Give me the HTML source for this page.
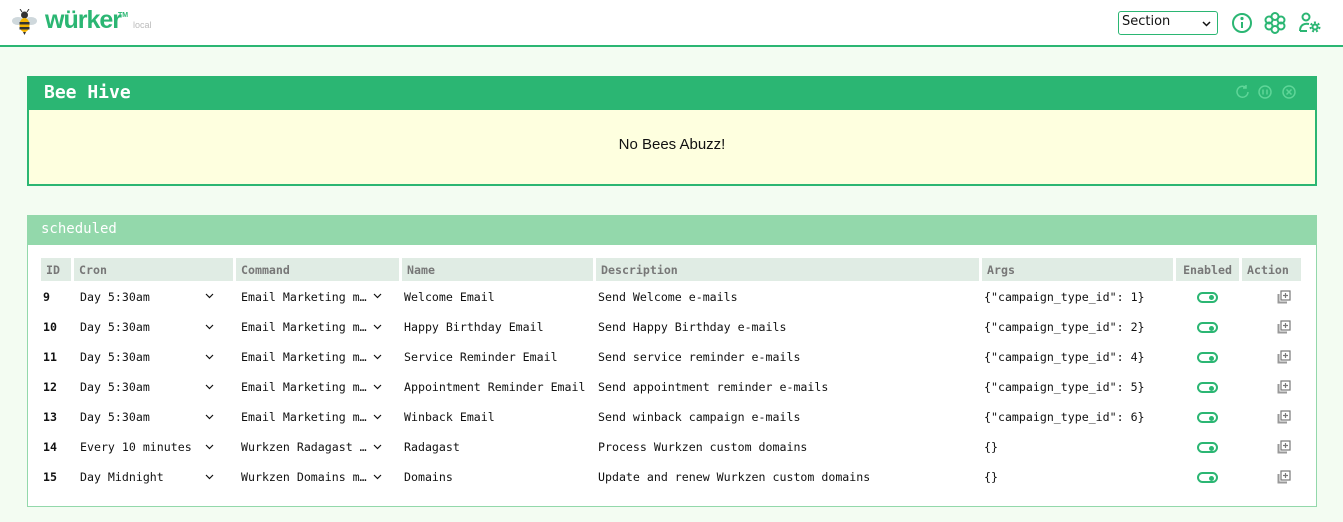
<!DOCTYPE html>
<html><head><meta charset="utf-8"><style>
*{box-sizing:border-box;margin:0;padding:0}
body{width:1343px;height:522px;background:#f3fcf2;font-family:"Liberation Sans",sans-serif;position:relative;overflow:hidden}
.top{position:absolute;left:0;top:0;width:1343px;height:47px;background:#fff;border-bottom:2px solid #2bb673}
.logo{position:absolute;left:45px;top:6px;font-size:25px;font-weight:bold;color:#2bb673;font-family:"Liberation Sans",sans-serif;letter-spacing:-1px}
.tm{position:absolute;left:118px;top:12px;font-size:7px;color:#2bb673;font-weight:bold}
.local{position:absolute;left:133px;top:20px;font-size:9px;color:#bbb}
.sel{position:absolute;left:1118px;top:11px;width:100px;height:24px;border:1px solid #2bb673;border-radius:3px;font-family:"DejaVu Sans",sans-serif;font-size:13px;padding:2px 3px;color:#111}
.p1{position:absolute;left:27px;top:76px;width:1290px;height:110px;border:2px solid #2bb673;background:#feffdf}
.p1 .h{height:32px;background:#2bb673;color:#fff;font-family:"DejaVu Sans Mono",monospace;font-weight:bold;font-size:18px;padding:4px 15px}
.p1 .b{text-align:center;font-size:15px;padding-top:26px;color:#111}
.p2{position:absolute;left:27px;top:215px;width:1290px;height:292px;border:1px solid #93d8ab;background:#fff}
.p2 .h{height:29px;background:#93d8ab;color:#fff;font-family:"DejaVu Sans Mono",monospace;font-size:14px;padding:5px 13px}
table{position:absolute;left:10px;top:42px;border-collapse:separate;border-spacing:3px 0;font-family:"DejaVu Sans Mono",monospace;font-size:11.6px;color:#111;table-layout:fixed;width:1266px}
th{background:#e0ece4;color:#777;text-align:left;height:23px;padding:0 5px;font-size:11.6px}
td{height:30px;padding:0 2px;white-space:nowrap;overflow:hidden}
td.dd{position:relative;padding-left:6px}
td.cm{padding-left:5px}
td.dd svg{position:absolute;right:19px;top:12px}
td.cm svg{right:17px}
.tg{display:inline-block;width:21px;height:11px;border:2px solid #2bb673;border-radius:6px;position:relative;vertical-align:middle}
.tg:after{content:"";position:absolute;right:2px;top:1.5px;width:5px;height:5px;border-radius:50%;background:#2bb673}
.ac{text-align:right;padding-right:10px}
.ac svg{vertical-align:middle}
</style></head><body>
<div class="top">
<svg style="position:absolute;left:11px;top:9px" width="27" height="27" viewBox="0 0 27 27"><ellipse cx="7" cy="12" rx="6" ry="4" fill="#cfd8dc"/><ellipse cx="20" cy="12" rx="6" ry="4" fill="#cfd8dc"/><circle cx="13.5" cy="6" r="3.5" fill="#333"/><line x1="11" y1="3" x2="9" y2="0" stroke="#333"/><line x1="16" y1="3" x2="18" y2="0" stroke="#333"/><ellipse cx="13.5" cy="16" rx="5" ry="7" fill="#f4b400"/><rect x="8.5" y="13" width="10" height="2.5" fill="#333"/><rect x="8.5" y="18" width="10" height="2.5" fill="#333"/><path d="M12 23 L13.5 26 L15 23Z" fill="#333"/></svg>
<div class="logo">würker</div><div class="tm">TM</div><div class="local">local</div>
<div class="sel">Section<svg style="position:absolute;right:6px;top:9px" width="9" height="6" viewBox="0 0 9 6"><path d="M1 1 L4.5 4.5 L8 1" fill="none" stroke="#111" stroke-width="1.5"/></svg></div>
<svg style="position:absolute;left:1231px;top:12px" width="22" height="22" viewBox="0 0 22 22" fill="none" stroke="#2bb673" stroke-width="2"><circle cx="11" cy="11" r="9"/><line x1="11" y1="10" x2="11" y2="16"/><circle cx="11" cy="6.5" r="0.6" fill="#2bb673"/></svg>
<svg style="position:absolute;left:1264px;top:12px" width="22" height="22" viewBox="0 0 22 22" fill="none" stroke="#2bb673" stroke-width="2"><circle cx="11" cy="4.5" r="3.5"/><circle cx="11" cy="17.5" r="3.5"/><circle cx="5" cy="8" r="3.5"/><circle cx="17" cy="8" r="3.5"/><circle cx="5" cy="14" r="3.5"/><circle cx="17" cy="14" r="3.5"/></svg>
<svg style="position:absolute;left:1298px;top:12px" width="24" height="22" viewBox="0 0 24 22" fill="none" stroke="#2bb673" stroke-width="2"><circle cx="8" cy="5" r="3.5"/><path d="M2 19 C2 13 6 11 11 12 M2 19 H9"/><circle cx="17" cy="15" r="2.5"/><circle cx="17" cy="15" r="4.5" stroke-dasharray="2 2"/></svg>
</div>
<div class="p1"><div class="h">Bee Hive
<svg style="position:absolute;right:14px;top:6px" width="66" height="16" viewBox="0 0 66 16" fill="none" stroke="#5fd598" stroke-width="1.5"><path d="M13 8 A5.5 5.5 0 1 1 11 3.5 M11 1 V4 H8"/><circle cx="30" cy="8" r="6"/><line x1="28" y1="5.5" x2="28" y2="10.5"/><line x1="32" y1="5.5" x2="32" y2="10.5"/><circle cx="54" cy="8" r="6"/><path d="M51.5 5.5 L56.5 10.5 M56.5 5.5 L51.5 10.5"/></svg></div>
<div class="b">No Bees Abuzz!</div></div>
<div class="p2"><div class="h">scheduled</div>
<table>
<colgroup><col style="width:30px"><col style="width:159px"><col style="width:163px"><col style="width:191px"><col style="width:383px"><col style="width:191px"><col style="width:63px"><col style="width:59px"></colgroup>
<tr><th>ID</th><th>Cron</th><th>Command</th><th>Name</th><th>Description</th><th>Args</th><th style="text-align:center">Enabled</th><th>Action</th></tr>
<tr><td style="height:31px"><b>9</b></td><td class="dd">Day 5:30am<svg width="9" height="6"><path d="M1 1 L4.5 4.5 L8 1" fill="none" stroke="#111" stroke-width="1.2"/></svg></td><td class="dd cm">Email Marketing m…<svg width="9" height="6"><path d="M1 1 L4.5 4.5 L8 1" fill="none" stroke="#111" stroke-width="1.2"/></svg></td><td>Welcome Email</td><td>Send Welcome e-mails</td><td>{"campaign_type_id": 1}</td><td style="text-align:center"><i class="tg"></i></td><td class="ac"><svg width="14" height="14" viewBox="0 0 14 14" fill="none" stroke="#777" stroke-width="1.2"><rect x="4" y="1" width="9" height="9"/><path d="M8.5 3 V8 M6 5.5 H11"/><path d="M1.5 4 V12.5 H10" stroke="#999" stroke-width="2"/></svg></td></tr>
<tr><td><b>10</b></td><td class="dd">Day 5:30am<svg width="9" height="6"><path d="M1 1 L4.5 4.5 L8 1" fill="none" stroke="#111" stroke-width="1.2"/></svg></td><td class="dd cm">Email Marketing m…<svg width="9" height="6"><path d="M1 1 L4.5 4.5 L8 1" fill="none" stroke="#111" stroke-width="1.2"/></svg></td><td>Happy Birthday Email</td><td>Send Happy Birthday e-mails</td><td>{"campaign_type_id": 2}</td><td style="text-align:center"><i class="tg"></i></td><td class="ac"><svg width="14" height="14" viewBox="0 0 14 14" fill="none" stroke="#777" stroke-width="1.2"><rect x="4" y="1" width="9" height="9"/><path d="M8.5 3 V8 M6 5.5 H11"/><path d="M1.5 4 V12.5 H10" stroke="#999" stroke-width="2"/></svg></td></tr>
<tr><td><b>11</b></td><td class="dd">Day 5:30am<svg width="9" height="6"><path d="M1 1 L4.5 4.5 L8 1" fill="none" stroke="#111" stroke-width="1.2"/></svg></td><td class="dd cm">Email Marketing m…<svg width="9" height="6"><path d="M1 1 L4.5 4.5 L8 1" fill="none" stroke="#111" stroke-width="1.2"/></svg></td><td>Service Reminder Email</td><td>Send service reminder e-mails</td><td>{"campaign_type_id": 4}</td><td style="text-align:center"><i class="tg"></i></td><td class="ac"><svg width="14" height="14" viewBox="0 0 14 14" fill="none" stroke="#777" stroke-width="1.2"><rect x="4" y="1" width="9" height="9"/><path d="M8.5 3 V8 M6 5.5 H11"/><path d="M1.5 4 V12.5 H10" stroke="#999" stroke-width="2"/></svg></td></tr>
<tr><td><b>12</b></td><td class="dd">Day 5:30am<svg width="9" height="6"><path d="M1 1 L4.5 4.5 L8 1" fill="none" stroke="#111" stroke-width="1.2"/></svg></td><td class="dd cm">Email Marketing m…<svg width="9" height="6"><path d="M1 1 L4.5 4.5 L8 1" fill="none" stroke="#111" stroke-width="1.2"/></svg></td><td>Appointment Reminder Email</td><td>Send appointment reminder e-mails</td><td>{"campaign_type_id": 5}</td><td style="text-align:center"><i class="tg"></i></td><td class="ac"><svg width="14" height="14" viewBox="0 0 14 14" fill="none" stroke="#777" stroke-width="1.2"><rect x="4" y="1" width="9" height="9"/><path d="M8.5 3 V8 M6 5.5 H11"/><path d="M1.5 4 V12.5 H10" stroke="#999" stroke-width="2"/></svg></td></tr>
<tr><td><b>13</b></td><td class="dd">Day 5:30am<svg width="9" height="6"><path d="M1 1 L4.5 4.5 L8 1" fill="none" stroke="#111" stroke-width="1.2"/></svg></td><td class="dd cm">Email Marketing m…<svg width="9" height="6"><path d="M1 1 L4.5 4.5 L8 1" fill="none" stroke="#111" stroke-width="1.2"/></svg></td><td>Winback Email</td><td>Send winback campaign e-mails</td><td>{"campaign_type_id": 6}</td><td style="text-align:center"><i class="tg"></i></td><td class="ac"><svg width="14" height="14" viewBox="0 0 14 14" fill="none" stroke="#777" stroke-width="1.2"><rect x="4" y="1" width="9" height="9"/><path d="M8.5 3 V8 M6 5.5 H11"/><path d="M1.5 4 V12.5 H10" stroke="#999" stroke-width="2"/></svg></td></tr>
<tr><td><b>14</b></td><td class="dd">Every 10 minutes<svg width="9" height="6"><path d="M1 1 L4.5 4.5 L8 1" fill="none" stroke="#111" stroke-width="1.2"/></svg></td><td class="dd cm">Wurkzen Radagast …<svg width="9" height="6"><path d="M1 1 L4.5 4.5 L8 1" fill="none" stroke="#111" stroke-width="1.2"/></svg></td><td>Radagast</td><td>Process Wurkzen custom domains</td><td>{}</td><td style="text-align:center"><i class="tg"></i></td><td class="ac"><svg width="14" height="14" viewBox="0 0 14 14" fill="none" stroke="#777" stroke-width="1.2"><rect x="4" y="1" width="9" height="9"/><path d="M8.5 3 V8 M6 5.5 H11"/><path d="M1.5 4 V12.5 H10" stroke="#999" stroke-width="2"/></svg></td></tr>
<tr><td><b>15</b></td><td class="dd">Day Midnight<svg width="9" height="6"><path d="M1 1 L4.5 4.5 L8 1" fill="none" stroke="#111" stroke-width="1.2"/></svg></td><td class="dd cm">Wurkzen Domains m…<svg width="9" height="6"><path d="M1 1 L4.5 4.5 L8 1" fill="none" stroke="#111" stroke-width="1.2"/></svg></td><td>Domains</td><td>Update and renew Wurkzen custom domains</td><td>{}</td><td style="text-align:center"><i class="tg"></i></td><td class="ac"><svg width="14" height="14" viewBox="0 0 14 14" fill="none" stroke="#777" stroke-width="1.2"><rect x="4" y="1" width="9" height="9"/><path d="M8.5 3 V8 M6 5.5 H11"/><path d="M1.5 4 V12.5 H10" stroke="#999" stroke-width="2"/></svg></td></tr>
</table></div>
</body></html>
